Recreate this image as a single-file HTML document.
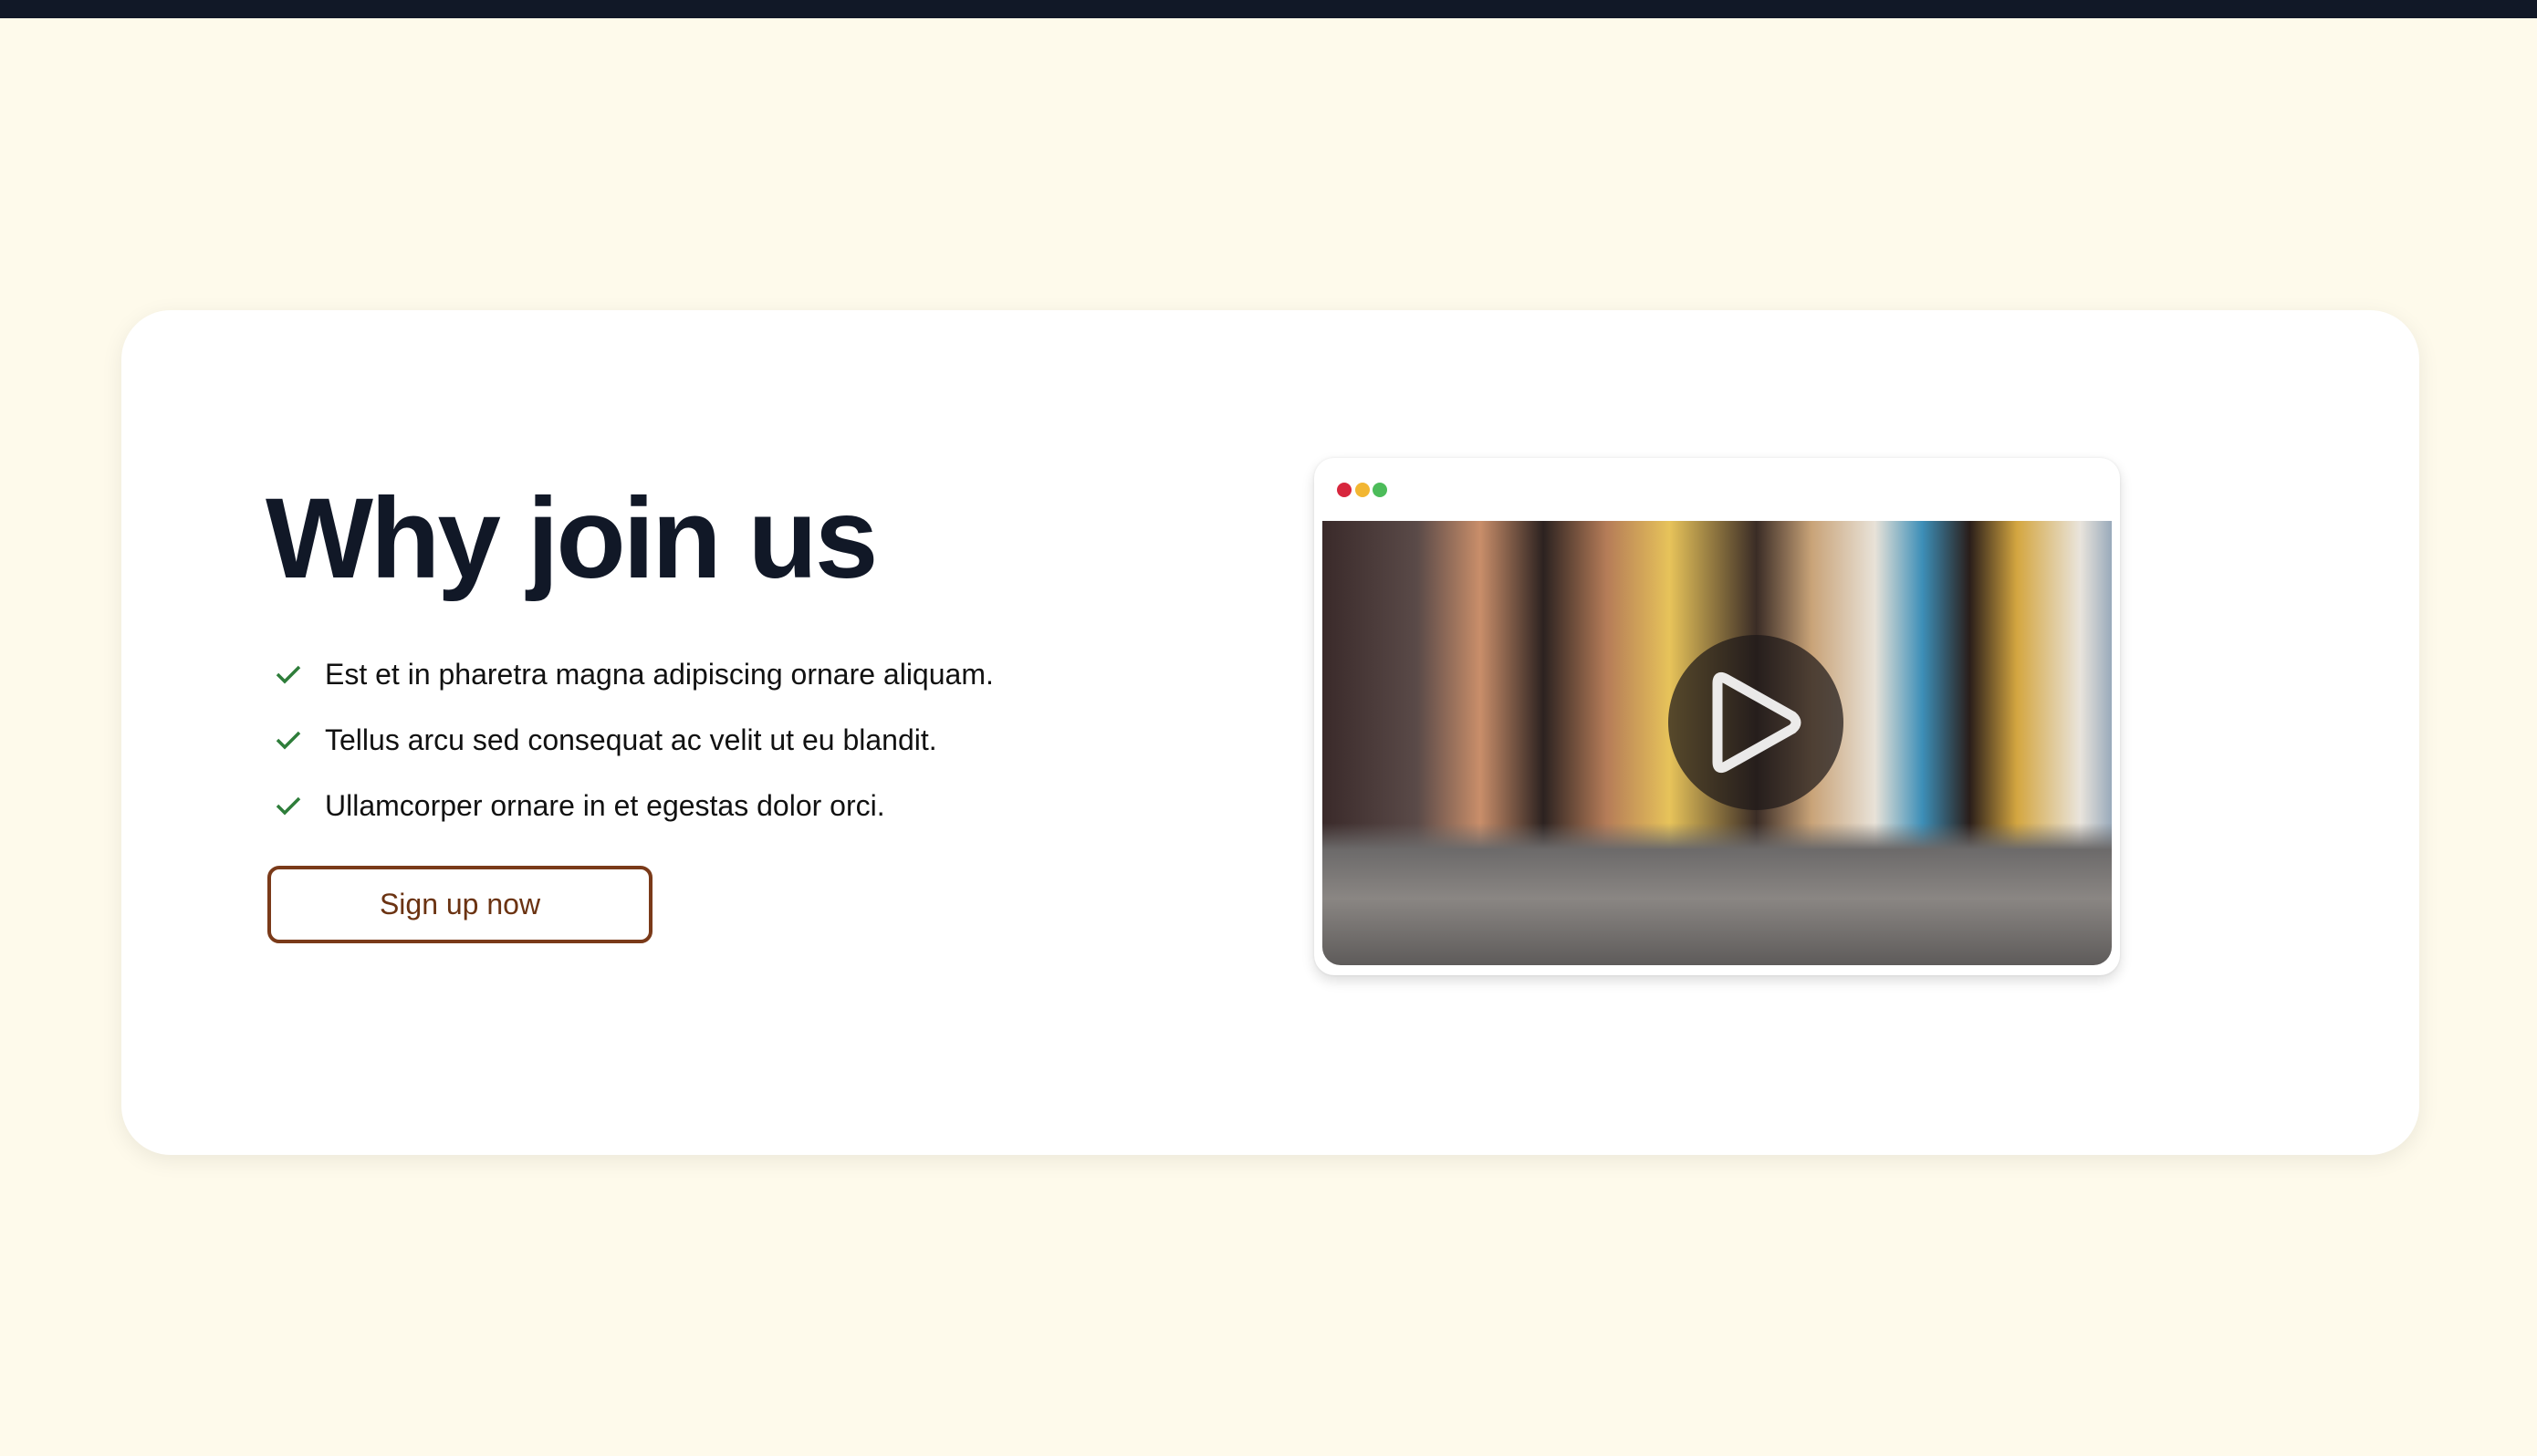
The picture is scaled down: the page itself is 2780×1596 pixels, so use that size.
<!DOCTYPE html>
<html><head><meta charset="utf-8"><style>
*{margin:0;padding:0;box-sizing:border-box}
body{width:2780px;height:1596px;background:#fefaeb;position:relative;overflow:hidden;font-family:"Liberation Sans",Arial,sans-serif}
.top{position:absolute;left:0;top:0;width:2780px;height:20px;background:#111827}
.card{position:absolute;left:133px;top:340px;width:2518px;height:926px;background:#fff;border-radius:54px;box-shadow:0 6px 24px rgba(0,0,0,.08)}
h1{position:absolute;left:291px;top:528px;font-size:125px;font-weight:bold;color:#111827;letter-spacing:-3px;line-height:1}
.li{position:absolute;left:356px;font-size:32px;color:#111;line-height:1}
.ck{position:absolute;left:301px;width:30px;height:24px}
.btn{position:absolute;left:293px;top:949px;width:422px;height:85px;border:4px solid #7a3a19;border-radius:13px;color:#6b3312;font-size:32px;text-align:center;line-height:77px}
.win{position:absolute;left:1440px;top:502px;width:883px;height:567px;background:#fff;border-radius:22px;box-shadow:0 6px 14px rgba(0,0,0,.14),0 0 3px rgba(0,0,0,.08)}
.dot{position:absolute;top:27px;width:16px;height:16px;border-radius:50%}
.img{position:absolute;left:9px;top:69px;width:865px;height:487px;border-radius:0 0 20px 20px;overflow:hidden;
background:
linear-gradient(180deg,rgba(0,0,0,0) 0%,rgba(0,0,0,0) 68%,#6c6a6a 74%,#8a8683 85%,#5e5b5a 100%),
linear-gradient(90deg,#3a2a2a 0%,#5a4a48 12%,#c98e6a 20%,#2c2220 28%,#b57c58 36%,#e7c35a 44%,#3a2c26 55%,#c9a378 62%,#e8e2d8 70%,#3d8fb8 76%,#2a1e1a 82%,#d4a640 88%,#e9e4dc 96%,#9ab 100%)}
.play{position:absolute;left:1828px;top:696px;width:192px;height:192px;border-radius:50%;background:rgba(30,25,25,.72)}
</style></head><body>
<div class="top"></div>
<div class="card"></div>
<h1>Why join us</h1>
<svg class="ck" style="top:727px" viewBox="0 0 30 24"><path d="M3 12l8 8L27 4" fill="none" stroke="#2e7d3a" stroke-width="3.5"/></svg>
<div class="li" style="top:723px">Est et in pharetra magna adipiscing ornare aliquam.</div>
<svg class="ck" style="top:799px" viewBox="0 0 30 24"><path d="M3 12l8 8L27 4" fill="none" stroke="#2e7d3a" stroke-width="3.5"/></svg>
<div class="li" style="top:795px">Tellus arcu sed consequat ac velit ut eu blandit.</div>
<svg class="ck" style="top:871px" viewBox="0 0 30 24"><path d="M3 12l8 8L27 4" fill="none" stroke="#2e7d3a" stroke-width="3.5"/></svg>
<div class="li" style="top:867px">Ullamcorper ornare in et egestas dolor orci.</div>
<div class="btn">Sign up now</div>
<div class="win">
<div class="dot" style="left:25px;background:#d7263d"></div>
<div class="dot" style="left:45px;background:#f2b632"></div>
<div class="dot" style="left:64px;background:#4cbc5a"></div>
<div class="img"></div>
</div>
<div class="play"></div>
<svg style="position:absolute;left:1868px;top:735px" width="112" height="114" viewBox="0 0 112 114"><path d="M14 14 Q14 4 23 9 L96 50 Q104 57 96 64 L23 105 Q14 110 14 100 Z" fill="none" stroke="#fff" stroke-width="11" stroke-linejoin="round" opacity=".9"/></svg>
</body></html>
